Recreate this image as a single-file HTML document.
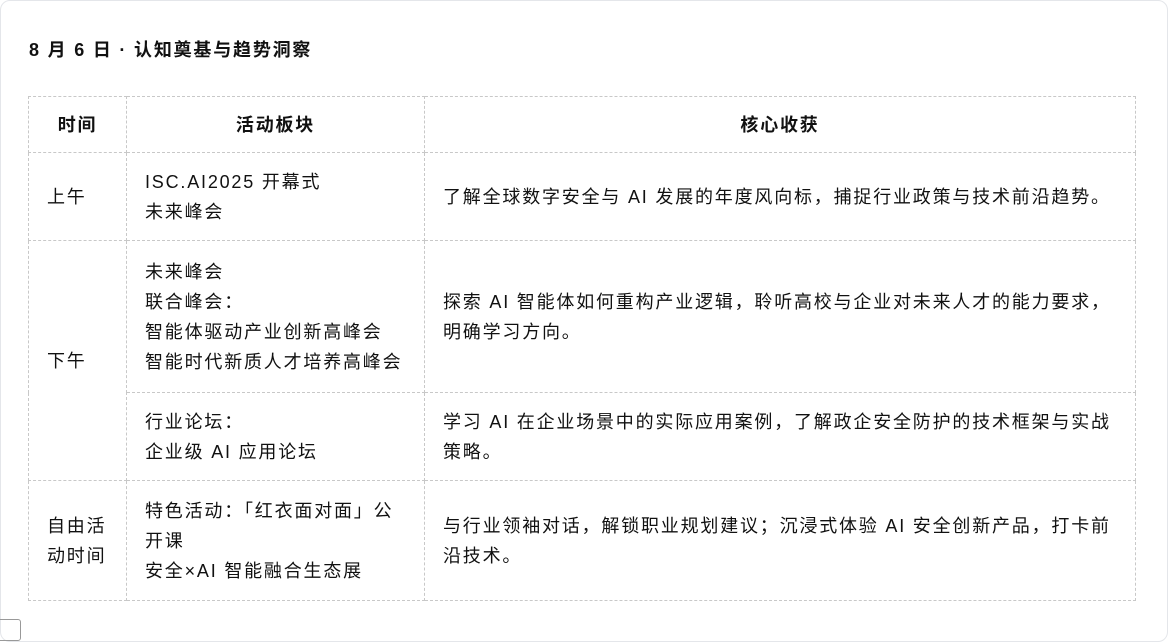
<!DOCTYPE html>
<html><head><meta charset="utf-8"><style>
html,body{margin:0;padding:0;background:#fff;}
body{width:1168px;height:631px;overflow:hidden;position:relative;font-family:"Liberation Sans","Noto Sans CJK SC",sans-serif;color:#111;}
.card{position:absolute;left:0;top:0;width:1166px;height:640px;border:1px solid #e4e6ea;border-radius:10px;}
h3{position:absolute;left:29px;top:37px;margin:0;font-size:18px;font-weight:bold;line-height:26px;letter-spacing:1.8px;}
table{position:absolute;left:28px;top:96px;border-collapse:collapse;font-size:18px;line-height:30px;letter-spacing:1.8px;table-layout:fixed;width:1107px;}
td,th{border:1px dashed #c8c8c8;padding:0 12px 0 18px;vertical-align:middle;text-align:left;}
th{text-align:center;font-weight:bold;height:55px;padding:0;}
.btn{position:absolute;left:-6px;top:619px;width:25px;height:20px;border:1px solid #999;border-radius:3px;}
</style></head><body>
<div class="card"></div>
<h3>8 月 6 日 · 认知奠基与趋势洞察</h3>
<table>
<colgroup><col style="width:98px"><col style="width:298px"><col style="width:711px"></colgroup>
<tr><th>时间</th><th>活动板块</th><th>核心收获</th></tr>
<tr style="height:88px"><td>上午</td><td>ISC.AI2025 开幕式<br>未来峰会</td><td>了解全球数字安全与 AI 发展的年度风向标，捕捉行业政策与技术前沿趋势。</td></tr>
<tr style="height:152px"><td rowspan="2">下午</td><td>未来峰会<br>联合峰会：<br>智能体驱动产业创新高峰会<br>智能时代新质人才培养高峰会</td><td>探索 AI 智能体如何重构产业逻辑，聆听高校与企业对未来人才的能力要求，<br>明确学习方向。</td></tr>
<tr style="height:88px"><td>行业论坛：<br>企业级 AI 应用论坛</td><td>学习 AI 在企业场景中的实际应用案例，了解政企安全防护的技术框架与实战<br>策略。</td></tr>
<tr style="height:120px"><td>自由活<br>动时间</td><td>特色活动：「红衣面对面」公<br>开课<br>安全×AI 智能融合生态展</td><td>与行业领袖对话，解锁职业规划建议；沉浸式体验 AI 安全创新产品，打卡前<br>沿技术。</td></tr>
</table>
<div class="btn"></div>
</body></html>
